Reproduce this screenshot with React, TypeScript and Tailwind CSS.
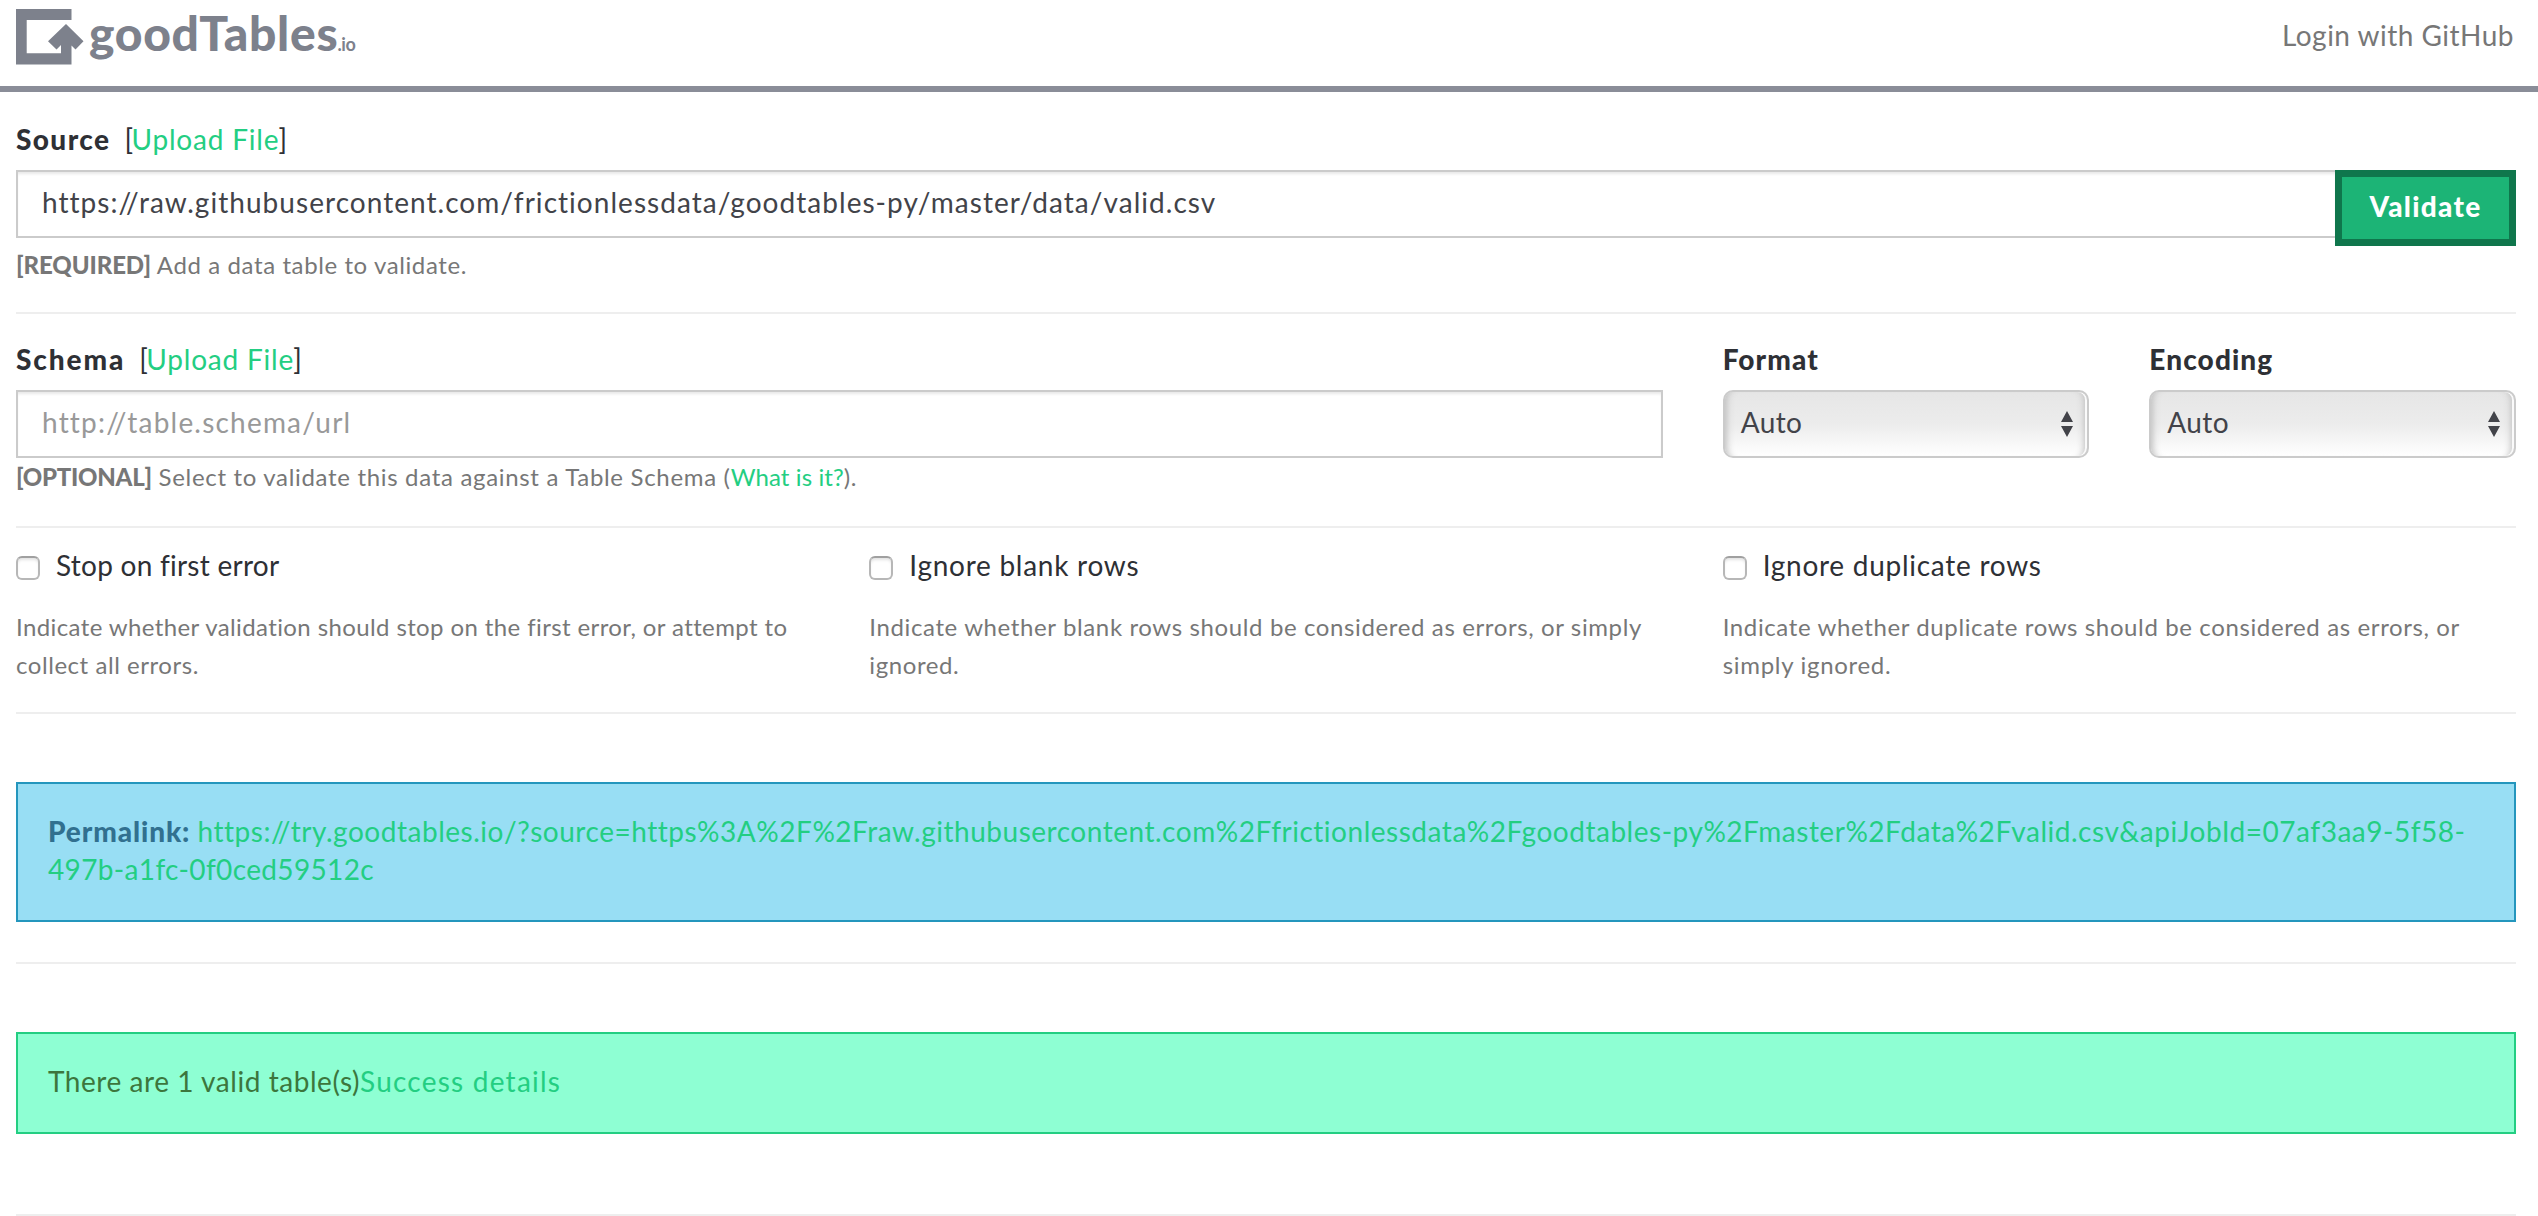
import type { ReactNode } from "react";

const Rule = ({ className }: { className: string }) => (
  <hr className={`h-[2px] border-0 bg-[#eeeeee] ${className}`} />
);

const Logo = () => (
  <div className="flex items-start text-[#7d818c]">
    <svg width="68" height="56" viewBox="0 0 68 56" className="mt-[9px] shrink-0" fill="currentColor" aria-hidden="true">
      <path d="M0 0H55.5V11H10.7V44.3H45V36L40.5 40.5L32 32.3L50 15L67.5 32.3L59.5 40.5L55.5 36.5V55.5H0Z" />
    </svg>
    <span className="ml-[5px] text-[48px] leading-[66px] font-black tracking-[0.7px]">goodTables</span>
    <span className="mt-[24px] -ml-[1px] text-[18px] leading-[40px] font-bold tracking-[-0.4px]">.io</span>
  </div>
);

const UploadLink = () => (
  <span className="tracking-[0.8px]">
    <span className="tracking-[-1.5px]">[</span>
    <a className="text-[#23ce82]">Upload File</a>]
  </span>
);

const FieldLabel = ({ children }: { children: ReactNode }) => (
  <div className="flex h-[40px] items-center leading-[40px] text-[#2e3035]">{children}</div>
);

const Select = ({ label, value, spacing }: { label: string; value: string; spacing: string }) => (
  <div className="col-span-2">
    <FieldLabel>
      <b className={`font-black ${spacing}`}>{label}</b>
    </FieldLabel>
    <div className="mt-[11px] flex h-[68px] items-center justify-between rounded-[10px] border-2 border-[#cbcbcb] bg-linear-to-b from-[#e6e6e6] via-[#ececec] to-white pr-[14px] pl-4 text-[#424349] shadow-[inset_9px_0_7px_-7px_#bfbfbf,inset_-2px_0_0_0_#fafafa,inset_-10px_0_7px_-7px_#bfbfbf]">
      <span className="mt-[-4px] tracking-[0.4px]">{value}</span>
      <svg width="12" height="26" viewBox="0 0 12 26" fill="currentColor" aria-hidden="true">
        <path d="M6 0L12 11H0ZM0 15H12L6 26Z" />
      </svg>
    </div>
  </div>
);

type OptionProps = { label: string; spacing: string; lines: { text: string; spacing: string }[] };

const Option = ({ label, spacing, lines }: OptionProps) => (
  <div>
    <label className="flex h-[40px] items-center text-[#2e3035]">
      <span className="mt-[6px] size-6 shrink-0 rounded-[6px] border-2 border-[#b7b7b7] border-t-[#a0a0a0] bg-white shadow-[inset_0_3px_3px_-1px_#e3e3e3]" />
      <span className={`ml-4 leading-[40px] ${spacing}`}>{label}</span>
    </label>
    <p className="mt-[23px] text-[24px] leading-[38px] whitespace-nowrap text-[#777777]">
      {lines.map((line) => (
        <span key={line.text} className={`block ${line.spacing}`}>
          {line.text}
        </span>
      ))}
    </p>
  </div>
);

const options: OptionProps[] = [
  {
    label: "Stop on first error",
    spacing: "tracking-[0.25px]",
    lines: [
      { text: "Indicate whether validation should stop on the first error, or attempt to", spacing: "tracking-[0.39px]" },
      { text: "collect all errors.", spacing: "tracking-[0.55px]" },
    ],
  },
  {
    label: "Ignore blank rows",
    spacing: "tracking-[0.73px]",
    lines: [
      { text: "Indicate whether blank rows should be considered as errors, or simply", spacing: "tracking-[0.62px]" },
      { text: "ignored.", spacing: "tracking-[0.6px]" },
    ],
  },
  {
    label: "Ignore duplicate rows",
    spacing: "tracking-[0.73px]",
    lines: [
      { text: "Indicate whether duplicate rows should be considered as errors, or", spacing: "tracking-[0.62px]" },
      { text: "simply ignored.", spacing: "tracking-[0.7px]" },
    ],
  },
];

export default function App() {
  return (
    <div className="h-[1216px] overflow-hidden bg-white font-[Lato,sans-serif] text-[28px] [font-variant-ligatures:none]">
      <header className="flex h-[92px] items-start justify-between border-b-[6px] border-[#8a8d98] pr-[24px] pl-4">
        <Logo />
        <a className="mt-[15px] leading-[40px] tracking-[0.49px] text-[#777777]">Login with GitHub</a>
      </header>

      <main className="pr-[22px] pl-4">
        <section className="pt-[27px]">
          <FieldLabel>
            <b className="mr-[14px] font-black tracking-[1.4px]">Source</b>
            <UploadLink />
          </FieldLabel>
          <div className="mt-[11px] flex items-start">
            <div className="flex h-[68px] flex-1 items-center border-2 border-r-0 border-[#cbcbcb] pl-[24px] text-[#424349] shadow-[inset_0_3px_3px_-1px_#e8e8e8]">
              <span className="-mt-[4px] tracking-[1.04px]">
                https://raw.githubusercontent.com/frictionlessdata/goodtables-py/master/data/valid.csv
              </span>
            </div>
            <button className="h-[76px] w-[181px] border-[7px] border-[#0f764c] bg-[#1cb476] pb-[4px] font-black tracking-[1.3px] text-white">
              Validate
            </button>
          </div>
          <p className="text-[24px] leading-[38px] tracking-[0.6px] text-[#777777]">
            <b className="font-black tracking-[-0.1px]">[REQUIRED]</b> Add a data table to validate.
          </p>
        </section>

        <Rule className="mt-[28px]" />

        <section className="grid grid-cols-12 gap-x-[60px] pt-[25px]">
          <div className="col-span-8">
            <FieldLabel>
              <b className="mr-[14px] font-black tracking-[1.9px]">Schema</b>
              <UploadLink />
            </FieldLabel>
            <div className="mt-[11px] flex h-[68px] items-center border-2 border-[#cbcbcb] pl-[24px] text-[#999999] shadow-[inset_0_3px_3px_-1px_#e8e8e8]">
              <span className="-mt-[4px] tracking-[1.2px]">http://table.schema/url</span>
            </div>
            <p className="text-[24px] leading-[38px] tracking-[0.6px] text-[#777777]">
              <b className="font-black tracking-[-0.25px]">[OPTIONAL]</b>{" "}
              <span className="tracking-[0.68px]">Select to validate this data against a Table Schema (</span>
              <a className="tracking-[0.1px] text-[#23ce82]">What is it?</a>).
            </p>
          </div>
          <Select label="Format" value="Auto" spacing="tracking-[1.1px]" />
          <Select label="Encoding" value="Auto" spacing="tracking-[1.1px]" />
        </section>

        <Rule className="mt-[30px]" />

        <section className="grid grid-cols-3 gap-x-[60px] pt-[17px]">
          {options.map((option) => (
            <Option key={option.label} {...option} />
          ))}
        </section>

        <Rule className="mt-[28px]" />

        <div className="mt-[68px] h-[140px] border-2 border-[#2496bd] bg-[#98def4] px-[30px] pt-[28px] leading-[38px] text-[#31708f]">
          <b className="font-black tracking-[0.9px]">Permalink:</b>{" "}
          <a className="text-[#23ce82]">
            <span className="tracking-[0.52px]">
              https://try.goodtables.io/?source=https%3A%2F%2Fraw.githubusercontent.com%2Ffrictionlessdata%2Fgoodtables-py%2Fmaster%2Fdata%2Fvalid.csv&amp;apiJobId=07af3aa9-5f58-
            </span>
            <span className="tracking-[0.35px]">497b-a1fc-0f0ced59512c</span>
          </a>
        </div>

        <Rule className="mt-[40px]" />

        <div className="mt-[68px] h-[102px] border-2 border-[#23ce82] bg-[#8effd3] px-[30px] pt-[28px] leading-[38px] text-[#3c763d]">
          <span className="tracking-[0.55px]">There are 1 valid table(s)</span>
          <a className="tracking-[1.23px] text-[#23ce82]">Success details</a>
        </div>

        <Rule className="mt-[80px]" />
      </main>
    </div>
  );
}
